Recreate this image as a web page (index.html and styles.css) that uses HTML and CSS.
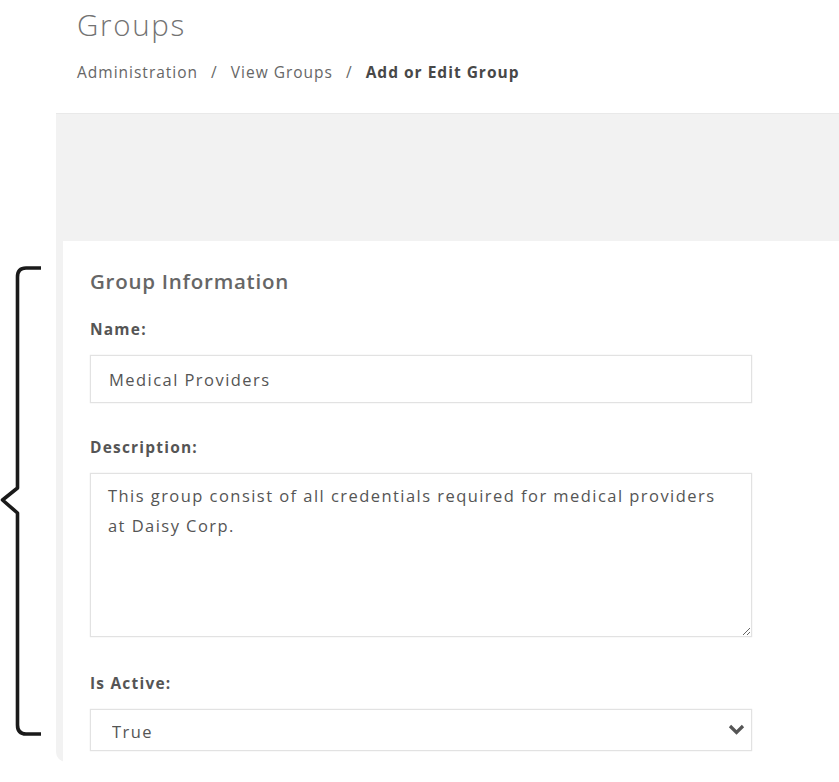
FILE: index.html
```html
<!DOCTYPE html>
<html lang="en">
<head>
  <meta charset="UTF-8">
  <title>Groups</title>
  <link rel="stylesheet" href="styles.css">
</head>
<body>

  <div class="page-head">
    <h1>Groups</h1>
    <div class="crumbs">
      <span>Administration</span>
      <span>/</span>
      <span>View Groups</span>
      <span>/</span>
      <span class="current">Add or Edit Group</span>
    </div>
  </div>

  <div class="panel">
    <div class="panel-top"></div>
    <div class="panel-body">
      <h3>Group Information</h3>

      <label for="name">Name:</label>
      <input type="text" id="name" class="field" value="Medical Providers">

      <label for="desc">Description:</label>
      <textarea id="desc" class="field area">This group consist of all credentials required for medical providers at Daisy Corp.</textarea>

      <label for="active">Is Active:</label>
      <div class="select-wrap">
        <select id="active" class="field">
          <option>True</option>
          <option>False</option>
        </select>
        <svg class="chev" width="17" height="11" viewBox="0 0 17 11">
          <path d="M2 2 L8.5 8.5 L15 2" fill="none" stroke="#555" stroke-width="3.2"/>
        </svg>
      </div>
    </div>
  </div>

  <!-- annotation bracket -->
  <svg class="bracket" width="44" height="476" viewBox="0 0 44 476">
    <path d="M41 4 H26 Q17.5 4 17.5 13 V224 L2.5 236 L17.5 249 V461 Q17.5 470 26 470 H41"
          fill="none" stroke="#1a1a1a" stroke-width="3.6" stroke-linejoin="round"/>
  </svg>

</body>
</html>
```

FILE: styles.css
```css
body {
  margin: 0;
  font-family: "Open Sans", Arial, sans-serif;
  color: #666;
  background: #fff;
  position: relative;
  height: 782px;
  overflow: hidden;
}

.page-head {
  padding: 7px 0 0 77px;
}

h1 {
  margin: 0;
  font-size: 29.5px;
  font-weight: 300;
  letter-spacing: 1.7px;
  color: #737373;
  line-height: 36px;
}

.crumbs {
  margin-top: 19px;
  font-size: 15.5px;
  line-height: 20px;
  letter-spacing: 1px;
  color: #666;
  display: flex;
  gap: 13px;
}

.crumbs .current {
  font-weight: 700;
  color: #484848;
}

.panel {
  margin: 31px 0 0 56px;
  background: #f2f2f2;
  padding-left: 7px;
  border-radius: 0 0 0 10px;
}

.panel-top {
  height: 127px;
  border-top: 1px solid #e9e9e9;
  margin-left: -7px;
}

.panel-body {
  background: #fff;
  padding: 27px 0 11px 27px;
}

h3 {
  margin: 0 0 24px;
  font-size: 20.5px;
  line-height: 27px;
  font-weight: 600;
  letter-spacing: 0.75px;
  color: #666;
}

label {
  display: block;
  font-size: 15.5px;
  line-height: 20px;
  font-weight: 700;
  letter-spacing: 1.2px;
  color: #555;
  margin-bottom: 16px;
}

.field {
  display: block;
  width: 662px;
  box-sizing: border-box;
  border: 1px solid #e2e2e2;
  box-shadow: 0 0 1px #ddd;
  font-family: "Open Sans", Arial, sans-serif;
  font-size: 16.5px;
  letter-spacing: 1.45px;
  color: #555;
  background: #fff;
  outline: none;
}

input.field {
  height: 48px;
  padding: 0 18px;
  margin-bottom: 34px;
}

.area {
  height: 164px;
  padding: 7px 17px;
  line-height: 30px;
  resize: vertical;
  margin-bottom: 36px;
}

.select-wrap {
  position: relative;
  width: 662px;
}

select.field {
  height: 42px;
  padding: 3px 21px 0;
  appearance: none;
  -webkit-appearance: none;
}

.chev {
  position: absolute;
  right: 7px;
  top: 15px;
}

.bracket {
  position: absolute;
  left: 0;
  top: 264px;
}
```
